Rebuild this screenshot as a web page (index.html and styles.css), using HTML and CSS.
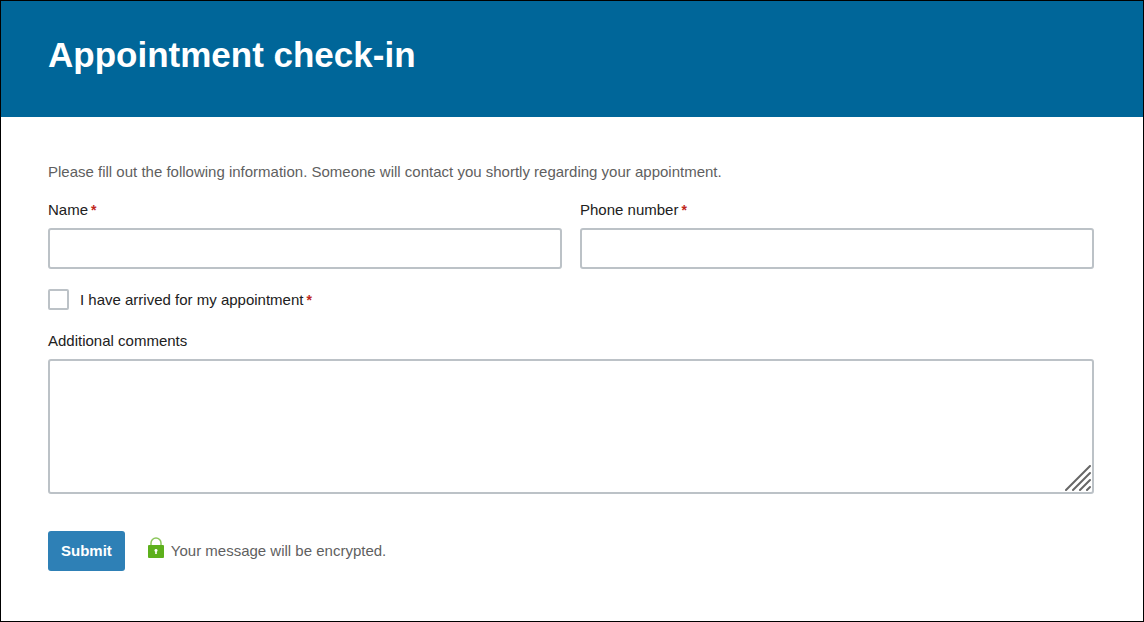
FILE: index.html
```html
<!DOCTYPE html>
<html lang="en">
<head>
    <meta charset="UTF-8">
    <meta name="viewport" content="width=device-width, initial-scale=1.0">
    <title>Appointment check-in</title>
    <link rel="stylesheet" href="styles.css">
</head>
<body>
    <header class="header">
        <h1>Appointment check-in</h1>
    </header>
    <main class="content">
        <p class="intro">Please fill out the following information. Someone will contact you shortly regarding your appointment.</p>
        <form>
            <div class="row">
                <div class="field">
                    <label for="name">Name<span class="required">*</span></label>
                    <input type="text" id="name" name="name" required>
                </div>
                <div class="field">
                    <label for="phone">Phone number<span class="required">*</span></label>
                    <input type="tel" id="phone" name="phone" required>
                </div>
            </div>
            <div class="check">
                <input type="checkbox" id="arrived" name="arrived" required>
                <label for="arrived">I have arrived for my appointment<span class="required">*</span></label>
            </div>
            <div class="field">
                <label for="comments">Additional comments</label>
                <div class="textarea-wrap">
                    <textarea id="comments" name="comments"></textarea>
                    <svg class="grip" width="26" height="26" viewBox="0 0 26 26" aria-hidden="true">
                        <path d="M1 25L25 1M8 25L25 8M15 25L25 15M22 25L25 22"/>
                    </svg>
                </div>
            </div>
            <div class="actions">
                <button type="submit" class="button">Submit</button>
                <p class="secure">
                    <svg class="lock" width="16" height="21" viewBox="0 0 16 21" aria-hidden="true">
                        <path class="shackle" d="M3 9V6a5 5 0 0 1 10 0v3"/>
                        <rect class="lock-body" x="0" y="8" width="16" height="13" rx="1"/>
                        <path class="keyhole" d="M8 12a1.5 1.5 0 0 1 .8 2.8V17H7.200v-2.200A1.500 1.500 0 0 1 8 12z"/>
                    </svg>
                    Your message will be encrypted.
                </p>
            </div>
        </form>
    </main>
</body>
</html>
```
FILE: styles.css
```css
* {
    box-sizing: border-box;
}
body {
    margin: 0;
    min-height: 100vh;
    border: 1px solid #000;
    background-color: #fff;
    color: #212121;
    font-family: "Liberation Sans", Helvetica, Arial, sans-serif;
    font-size: 15px;
    line-height: 20px;
}
.header {
    background-color: #006699;
    color: #fff;
    padding: 32px 49px 40px 47px;
}
h1 {
    margin: 0;
    font-size: 35px;
    line-height: 44px;
}
.content {
    padding: 45px 49px 48px 47px;
}
p {
    margin: 0;
    color: #5f5f5f;
}
.intro {
    margin-bottom: 18px;
}
.row {
    display: grid;
    grid-template-columns: 1fr 1fr;
    gap: 18px;
}
.field label {
    display: block;
    margin-bottom: 8px;
}
.required {
    color: #c0271d;
    font-size: 14px;
    font-weight: bold;
    line-height: 1;
    margin-left: 3px;
}
input[type="text"], input[type="tel"], textarea {
    display: block;
    width: 100%;
    border: 2px solid #bcc2c7;
    border-radius: 3px;
    background-color: #fff;
    padding: 8px;
    font: inherit;
    color: inherit;
}
input[type="text"], input[type="tel"] {
    height: 41px;
}
.check {
    display: flex;
    align-items: flex-end;
    gap: 11px;
    margin: 20px 0 21px;
}
.check input {
    appearance: none;
    width: 21px;
    height: 21px;
    margin: 0;
    border: 2px solid #bcc2c7;
    border-radius: 2px;
    background-color: #fff;
}
.check input:checked {
    background-color: #2e80b6;
}
.textarea-wrap {
    position: relative;
}
textarea {
    height: 135px;
    resize: vertical;
}
textarea::-webkit-resizer {
    background: transparent;
}
.grip {
    position: absolute;
    right: 3px;
    bottom: 3px;
    pointer-events: none;
    fill: none;
    stroke: #666;
    stroke-width: 2;
    stroke-linecap: round;
}
.actions {
    display: flex;
    align-items: center;
    gap: 23px;
    margin-top: 37px;
}
.button {
    background-color: #2e80b6;
    color: #fff;
    border: none;
    border-radius: 3px;
    padding: 10px 13px;
    font: inherit;
    font-weight: bold;
    cursor: pointer;
}
.button:hover {
    background-color: #006699;
}
.secure {
    display: flex;
    align-items: center;
    gap: 7px;
}
.lock {
    margin-bottom: 8px;
}
.shackle {
    fill: none;
    stroke: #8bc65a;
    stroke-width: 1.5;
}
.lock-body {
    fill: #5db01c;
}
.keyhole {
    fill: #fff;
}
```
